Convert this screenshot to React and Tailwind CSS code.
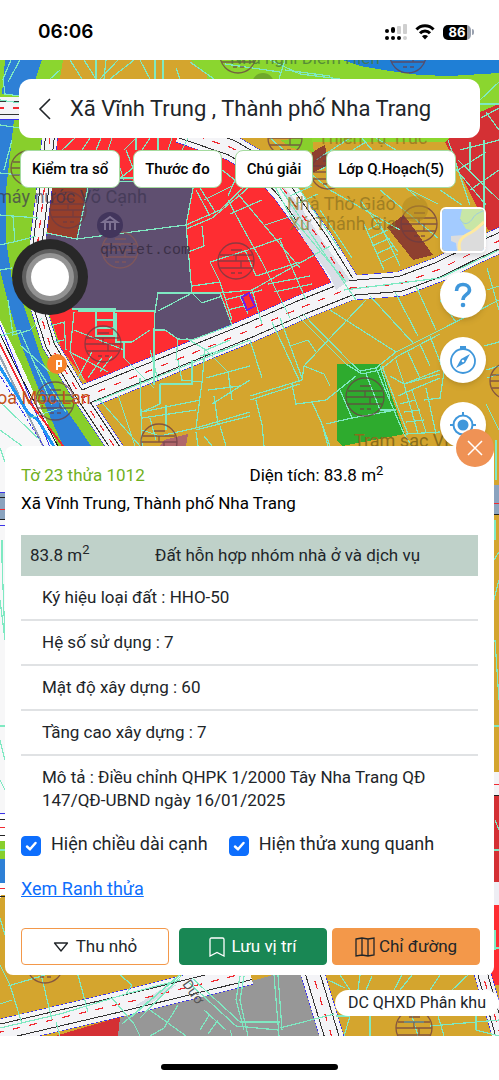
import React, { useState } from 'react';
import clsx from 'clsx';

// [fill, points]
const zones = [
  ['#8bd62f', '0,60 499,60 499,112 445,142 300,142 200,100 0,446'],
  ['#d4a52e', '63,60 190,60 207,74 210,142 52,142 58,90'],
  ['#1f7fd6', '343,60 360,66 390,71 420,75 450,76 499,73 499,60'],
  ['#f7f7f8', '0,320 60,446 60,540 14,840 0,900'],
  ['#88cf2c', '0,120 42,120 37,200 33,300 58,360 104,446 58,446 0,318'],
  ['#2e80d6', '5,60 42,60 36,78 22,96 2,94'],
  ['#2e80d6', '0,120 14,120 6,190 6,240 12,280 22,300 40,355 60,400 91,446 63,446 45,405 20,342 8,302 0,270'],
  ['#fe2d32', '56,136 195,136 240,155 262,178 334,276 325,292 250,322 90,386 62,350 44,300 50,190'],
  ['#d43034', '445,142 480,112 499,104 499,230 488,230'],
  ['#963f2b', '52,186 88,186 77,239 47,232'],
  ['#5f4f70', '88,181 120,179 193,188 186,225 192,293 220,293 232,325 212,339 177,339 165,330 154,330 155,311 78,311 42,296 46,233 76,239'],
  ['#8e402f', '387,227 404,215 433,255 413,260'],
  ['#8e402f', '312,152 325,145 328,165 312,173'],
  ['#2eab2e', '337,364 380,364 405,434 342,446 337,440'],
  ['#88cf2c', '280,140 312,138 314,152 292,148'],
  ['#b0676b', '164,440 188,434 186,446 160,446'],
  ['#8aa3bf', '0,492 8,492 8,520 0,520'],
  ['#8aa3bf', '490,485 499,485 499,514 490,514'],
  ['#ffffff', '0,815 8,815 8,841 0,841'],
  ['#88cf2c', '0,841 8,841 8,859 0,859'],
  ['#2e80d6', '0,859 8,859 8,883 0,883'],
  ['#ffffff', '0,883 8,883 8,895 0,895'],
  ['#f3f3f6', '490,772 499,772 499,795 490,795'],
  ['#d43034', '490,796 499,796 499,882 490,882'],
  ['#eeeef4', '490,882 499,882 499,905 490,905'],
  ['#fe2d32', '490,905 499,905 499,985 490,985'],
  ['#979797', '120,1018 273,975 304,972 322,1040 100,1040'],
  ['#d43034', '55,1036 120,1017 118,1036'],
];

// [center line, width]
const roads = [
  ['M-4 108 H30', 22],
  ['M50 136 L43 200 L38 240 L36 300 L50 345 L78 392 L118 452', 15],
  ['M180 130 L232 148 L262 166 L284 190 L320 240 L346 282', 25],
  ['M82 398 L250 330 L300 308 L350 288 L400 284 L440 269 L470 254 L505 238', 24],
  ['M-4 1033 L120 1004 L250 972', 25],
  ['M310 965 L334 1044', 23],
  ['M480 965 L503 1044', 16],
];

const parcels = [
  // top strip
  'M70 60 L82 79 M84 60 L96 79 M96 60 V79 M106 60 L104 79 M118 60 L100 79 M134 60 L110 79 M140 60 L150 79 M155 60 V79 M163 60 V79 M176 68 L180 79 M60 70 L50 79 M190 62 L214 79 M285 60 L279 79 M270 60 L300 74 L340 79 M285 70 L330 76 M225 64 L280 72',
  'M11 60 L3 79 L5 94 L20 96 M0 100 L20 103 M20 60 L8 82',
  // right of the search card
  'M480 100 L499 82 M480 104 H499 M481 118 L499 108 M486 112 L499 130',
  // river side
  'M0 125 L20 128 M0 173 L30 176 L45 180 M12 140 L4 170 M0 215 L38 218 M0 245 L22 240 L36 236 M13 216 L15 242 M0 270 L12 268 M8 300 L13 335 L30 330 L42 318 M0 336 L20 330 L52 405 M20 345 L50 372 M36 366 L66 412 M0 402 L40 440 M0 430 L22 446 M30 418 L60 408',
  // red block, top
  'M75 138 L62 150 M90 138 L82 150 M101 138 L96 150 M112 138 L108 150 M124 150 L136 138 M136 138 V150 M150 138 L142 150 M158 138 V150 M172 138 L168 150 M188 138 L182 150 M120 168 L124 180 M126 150 L133 168 L118 180 M120 178 L133 178',
  'M193 188 L186 225 L192 293 M88 181 L193 182 M88 188 L77 239 M46 233 L77 239 L186 225 M78 311 H155 L158 293 H220 L232 325 M155 311 L154 330 M192 293 L158 311 M192 293 L202 303 L222 296 M72 309 H116',
  'M186 229 L212 218 L240 195 L257 180 M186 225 L220 210 L245 186 M196 190 L210 216 M200 188 L216 213 M222 170 L235 180 L228 196 M228 200 L244 230 L262 262 M238 194 L300 268 M202 226 L204 246 L188 252 M192 286 L220 282 L210 262 L248 250 L282 238 M220 282 L232 320 M220 293 L252 290 M252 290 L330 246 M252 290 L262 324 M262 262 L290 318 M280 240 L306 300 M265 225 L295 215 M245 250 L256 276 L300 262 M225 300 L240 296 L248 314 M240 296 L262 290 M228 310 L244 306 M268 284 L310 276 M274 292 L312 284 M230 214 L262 200 M204 200 L232 186',
  // red block, bottom
  'M74 312 L70 352 L84 380 M70 352 L108 372 M74 330 L124 350 M96 312 V336 H114 V312 M96 320 H114 M96 328 H114 M116 313 V342 H132 L150 330 M124 342 L124 358 L154 388 M154 330 V385 M50 326 L64 322 L66 350 M78 378 L92 352 M88 378 L102 358 M100 372 L112 356 M64 340 L54 342 M178 338 L176 360 M154 330 L165 330 L178 339 L192 340 L232 325 M186 338 L206 350 L230 340',
  // gold block below the road
  'M98 398 L140 446 M118 395 L135 446 M140 378 L142 446 M160 384 H192 V360 M160 384 V404 L142 412 M142 412 L200 400 M150 350 L158 380 M142 418 L196 410 M150 418 L156 440 M166 405 V430 M178 360 L182 380 L202 382 L205 350 M202 382 L196 428 L250 412 M196 430 L250 416 M206 378 L250 366 M208 390 L240 386 M212 404 L250 380 M214 396 L218 424 M206 350 L228 372 L232 400 M196 432 L198 446 M204 436 L212 446 M220 426 L226 446 M200 356 L224 350 M142 430 L160 436 L196 428',
  'M250 340 L262 378 M272 322 L300 382 M280 318 L302 378 M250 396 L302 380 L304 366 L330 338 L366 300 M250 400 L300 384 M304 366 L324 374 L330 386 M290 346 L308 340 L316 352 M303 314 L350 362 L360 371 L376 368 L396 352 L440 330 L499 300 M298 316 L346 364 L362 374 L380 370 L398 356 L440 334 M330 310 L396 352 M370 296 L414 344 M395 292 L418 336 M416 286 L436 330 M440 300 L456 322 M292 384 L296 404 L312 402 L326 400 L356 376 M256 400 L262 424 L264 446 M312 402 L322 424 L328 446 M322 424 L330 446 M326 424 L352 418 L396 410 M340 390 L352 418 M366 374 L380 410 H396 M380 366 L390 398 M376 368 L404 434 M382 366 L408 434',
  'M396 360 L404 384 L440 370 M390 376 L404 384 L440 374 M398 396 L416 388 L440 378 M404 384 L418 434 M412 390 L426 432 M400 404 L416 400 M404 412 L420 410 M406 422 L424 420 M420 344 L430 366 M408 352 L420 378 M430 336 L444 372 L440 398 L424 400 M406 434 L440 432 M426 388 L436 434 M404 434 L412 446 M486 370 L499 366 M487 378 L499 374 M484 346 L499 342 M486 404 L499 430',
  // north east gold
  'M262 150 L300 190 M270 138 L330 190 L400 230 M300 190 L340 250 M316 160 L350 138 M320 170 L366 142 M330 178 L364 150 L420 200 M362 138 L372 150 M376 138 L396 150 M440 150 L486 205 M380 190 L438 238 M360 200 L398 252 M410 190 L438 204 M440 190 L462 205 M448 140 L470 205 M368 230 L382 222 M370 238 L388 230 M372 246 L390 238 M376 254 L394 246 M382 262 L398 254 M364 224 L384 270 M378 220 L400 266 M320 210 L352 258 M458 170 L486 152 M458 160 L499 200 M470 190 L499 170 M460 150 L499 140 M470 142 V170 M484 140 V215 M440 290 L450 280 M487 268 L499 310 M487 290 L499 286 M456 250 L487 236',
  // diagonal road services
  'M266 170 L290 215 L346 282 M272 176 L330 262 L356 300 M344 290 L440 278 L499 250 M94 402 L250 340 M290 196 L312 186 M296 204 L318 194',
  // strips beside the panel
  'M0 448 L5 462 M2 540 V560 L5 640 M0 600 L5 640 M0 726 H5 M0 740 L5 760 M0 780 L5 790 M0 850 H5 M0 918 L5 935 M496 440 V480 M495 520 V540 M494 560 L499 552 M494 600 L499 580 M495 640 L499 700 M494 726 H499 M495 820 L499 830 M494 850 H499 M495 930 V950 M495 948 H499',
  // bottom strip
  'M0 965 L10 985 L22 1024 M8 986 L45 975 M0 1004 L12 1000 M40 970 L52 1020 M78 975 L88 1012 M120 975 L132 985 L126 994 M0 1028 L60 1014 L126 994 L180 980 M56 1022 L60 1036 M112 998 L134 1024 L140 1036 M130 1018 L180 975 M122 1024 L176 978 M140 1018 L182 975 M150 1010 L186 1036 M188 982 L236 1026 L278 1030 M192 978 L240 1022 L280 1022 M240 976 L236 1000 L244 1030 M244 976 L240 1000 L248 1036 M274 975 L279 1036 M278 975 L282 1030 M280 1028 L334 1014 M204 1010 L226 1030 M210 1014 L200 1030 M218 1020 L208 1034 M230 1030 L232 1036 M178 1005 L164 1028 L150 1036 M328 980 L345 988 M340 975 L350 990 M360 975 L358 990 M372 976 L366 990 M402 975 L394 990 M412 975 L400 990 M440 975 L430 990 M452 990 L468 975 M336 1016 H350 L344 1036 M370 1016 V1036 M404 1022 H424 M412 1016 L418 1036 M438 1016 L444 1036 M476 1016 V1030 L499 1036 M430 1026 L499 1020',
];

const stamps = [
  [238, 55, 18], [408, 55, 18], [28, 168, 17], [68, 210, 18], [236, 261, 18], [120, 250, 18],
  [103, 344, 18], [55, 401, 19], [159, 442, 18], [365, 397, 19], [419, 224, 18], [285, 138, 17],
  [328, 172, 17], [508, 381, 18], [45, 965, 18], [414, 1028, 18],
];

function Stamp({ x, y, r }) {
  return (
    <g
      transform={`translate(${x} ${y})`}
      fill="none"
      stroke={x === 120 ? '#8a5a55' : '#6b3c45'}
      strokeWidth="1.3"
      opacity="0.75"
    >
      <circle r={r} />
      <path d={`M${-r + 2} -6 H${r - 2} M${-r} 0 H${r} M${-r + 2} 7 H${r - 2} M0 -6 V0 M-5 -11 H6 M-5 12 h4 m3 0 h4 M5 0 V7`} />
    </g>
  );
}

function PlanningMap() {
  return (
    <svg
      className="absolute inset-0 h-full w-full"
      viewBox="0 60 499 976"
      preserveAspectRatio="xMidYMin slice"
      aria-hidden="true"
    >
      <rect y="60" width="499" height="976" fill="#d4a52e" />
      <g shapeRendering="crispEdges">
        {zones.map(([fill, points], i) => (
          <polygon key={i} fill={fill} points={points} />
        ))}
        <g fill="none" strokeLinejoin="round">
          {roads.map(([d, w], i) => <path key={i} d={d} stroke="#3b33e8" strokeWidth={w + 1} />)}
          {roads.map(([d, w], i) => <path key={i} d={d} stroke="#f4f4f7" strokeWidth={w} />)}
          {roads.map(([d, w], i) => <path key={i} d={d} stroke="#333" strokeWidth={w * 0.66} />)}
          {roads.map(([d, w], i) => <path key={i} d={d} stroke="#f4f4f7" strokeWidth={w * 0.66 - 2} />)}
        </g>
        <path d="M280 182 L300 206 L322 240 L350 280 L336 290 L330 276 L304 240 Z" fill="#d9dde6" />
        <path d="M135 1006 L160 990 L178 984 L150 1004 Z" fill="#d9dde6" />
        <g fill="none" stroke="#f02b32" strokeWidth="1.2" strokeDasharray="8 9">
          {roads.map(([d], i) => <path key={i} d={d} />)}
        </g>

        {/* canal bank and railway on the left */}
        <g fill="none">
          <path d="M-2 320 L52 452" stroke="#3b33e8" />
          <path d="M-2 330 L20 375 L60 450" stroke="#222" />
          <path d="M-2 340 L28 400 L66 450" stroke="#f02b32" strokeWidth="2" />
          <path d="M-2 352 L44 448" stroke="#9aa4b2" strokeWidth="2" />
          <path d="M-2 364 L28 413 L38 420 L56 450" stroke="#2196f3" strokeWidth="3" />
          <path d="M-2 372 L46 450" stroke="#3b33e8" strokeDasharray="3 2" />
          <path d="M0 492 H6 M0 525 H6 M0 813 H6" stroke="#3b33e8" />
          <path d="M0 497 H6 M0 519 H6 M0 819 H6 M0 835 H6 M0 896 H6 M493 514 H499 M493 795 H499" stroke="#222" />
          <path d="M0 509 H6 M493 503 H499 M0 827 H6 M493 784 H499 M0 888 H6" stroke="#f02b32" />
        </g>

        <g fill="none" stroke="#7fe9c2" strokeWidth="1.2">
          {parcels.map((d, i) => <path key={i} d={d} />)}
        </g>
        <path d="M242 297 L249 293 L255 306 L247 310 Z" fill="none" stroke="#7a1be0" strokeWidth="2" />
      </g>

      {stamps.map(([x, y, r]) => <Stamp key={`${x}-${y}`} x={x} y={y} r={r} />)}

      <circle cx="110" cy="225" r="13" fill="#42355c" />
      <path d="M103 222 H117 L110 217 Z M105 223 V230 M110 223 V230 M115 223 V230" stroke="#7d7192" strokeWidth="2" fill="none" />
      <circle cx="57" cy="364" r="10" fill="#f5822a" />
      <path d="M57 370 V361 H61 V366 H57" stroke="#fff" strokeWidth="2" fill="none" />
      <circle cx="415" cy="209" r="13" fill="#b08a22" opacity="0.6" />
      <circle cx="263" cy="84" r="11" fill="#6fa82b" />

      <g fontFamily="Roboto, sans-serif" fontSize="18">
        <text x="-4" y="203" fill="#3c3550" opacity="0.7">máy nước Võ Cạnh</text>
        <text x="230" y="64" fill="#4a7a3a" fontSize="17" opacity="0.8">Nhà nghỉ Diễm Hiền</text>
        <text x="287" y="210" fill="#8b7020" opacity="0.7">Nhà Thờ Giáo</text>
        <text x="289" y="230" fill="#8b7020" opacity="0.7">Xứ Thánh Gia</text>
        <text x="318" y="144" fill="#8b7020" opacity="0.7">Thiền Tự Trúc</text>
        <text x="-3" y="404" fill="#c2521c">oa Mộc Lan</text>
        <text x="354" y="447" fill="#8a6d1c">Trạm sạc Vi</text>
        <text x="182" y="984" fill="#555" transform="rotate(55 182 984)" fontSize="14">Dươ</text>
        <text x="100" y="254" fill="#3c3148" fontFamily="Liberation Mono, monospace" fontSize="15">qhviet.com</text>
      </g>
    </svg>
  );
}

function StatusBar() {
  return (
    <header className="flex h-[60px] items-center justify-between bg-white pl-[38px] pr-[25px] pt-1">
      <span className="font-['Inter',sans-serif] text-[19px] font-semibold leading-6 text-black">06:06</span>
      <div className="flex items-center gap-2">
        <svg className="h-4 w-[22px]" viewBox="0 0 22 16" aria-hidden="true">
          <g fill="#000">
            <rect y="5" width="4" height="4" rx="2" />
            <rect x="6" y="3" width="4" height="6" rx="2" />
            <rect y="12" width="4" height="4" rx="2" />
            <rect x="6" y="12" width="4" height="4" rx="2" />
            <rect x="12" y="12" width="4" height="4" rx="2" />
          </g>
          <g fill="#cfcfcf">
            <rect x="12" y="2" width="4" height="8" rx="1" />
            <rect x="18" width="4" height="10" rx="1" />
            <rect x="18" y="12" width="4" height="4" rx="2" />
          </g>
        </svg>
        <svg className="h-4 w-5" viewBox="0 0 20 16" fill="none" stroke="#000" strokeWidth="3" aria-hidden="true">
          <path d="M1.5 5.6 C6 .6 14 .6 18.5 5.6" />
          <path d="M5 9.3 C7.6 6.3 12.4 6.3 15 9.3" />
          <path d="M10 15.5 L7 12.2 C8.5 10.7 11.5 10.7 13 12.2 Z" fill="#000" stroke="none" />
        </svg>
        <div className="flex items-center gap-px">
          <div className="flex h-[15px] w-7 items-center justify-center rounded-[5px] bg-gradient-to-r from-black from-85% to-gray-400 to-85% font-['Inter',sans-serif] text-[13px] font-bold leading-none text-white">
            86
          </div>
          <div className="h-[6px] w-[2px] rounded-r-full bg-gray-400" />
        </div>
      </div>
    </header>
  );
}

function RoundButton({ label, children }) {
  return (
    <button
      aria-label={label}
      className="flex size-[46px] items-center justify-center rounded-full bg-white text-[#3f97db] shadow-md"
    >
      {children}
    </button>
  );
}

function MapTools() {
  return (
    <div className="mr-[13px] mt-[19px] flex flex-col items-end gap-[19px]">
      <button aria-label="Lớp bản đồ" className="size-[46px] overflow-hidden rounded-md border-2 border-white shadow-md">
        <svg className="size-full" viewBox="0 0 42 42" aria-hidden="true">
          <rect width="42" height="42" fill="#a3cbff" />
          <path d="M20 0 H42 V24 L24 20 L18 10 Z" fill="#c8e6a6" />
          <path d="M42 16 L22 26 L9 27 L9 32 L14 34 L15 42 H42 Z" fill="#dcdcdc" />
          <path d="M18 10 C22 18 28 14 31 9 S38 4 42 1" fill="none" stroke="#9ccbe0" strokeWidth="1" />
          <path d="M18 42 C15 32 20 28 28 24 S38 16 42 13" fill="none" stroke="#ffe9a0" strokeWidth="3" />
        </svg>
      </button>
      <RoundButton label="Trợ giúp">
        <svg className="size-7" viewBox="0 0 28 28" fill="none" stroke="currentColor" strokeWidth="3.6" aria-hidden="true">
          <path d="M7.5 10 C7.5 5 10.500 3.500 14 3.500 C18 3.500 20.500 5.800 20.500 9 C20.500 13.500 14 13.500 14 19" />
          <circle cx="14" cy="24" r="2.3" fill="currentColor" stroke="none" />
        </svg>
      </RoundButton>
      <RoundButton label="La bàn">
        <svg className="size-7" viewBox="0 0 28 28" aria-hidden="true">
          <circle cx="14" cy="15" r="12" fill="none" stroke="currentColor" strokeWidth="1.8" />
          <path d="M11 0 h6 v3 h-6 z" fill="currentColor" />
          <path d="M21 8 L16 17 L7 22 L12 13 Z" fill="currentColor" />
          <circle cx="14" cy="15" r="1.3" fill="#fff" />
        </svg>
      </RoundButton>
      <RoundButton label="Vị trí của tôi">
        <svg className="size-7" viewBox="0 0 28 28" fill="none" stroke="currentColor" strokeWidth="2" aria-hidden="true">
          <circle cx="14" cy="14" r="9.5" />
          <circle cx="14" cy="14" r="5.5" fill="currentColor" stroke="none" />
          <path d="M14 1 V5 M14 23 V27 M1 14 H5 M23 14 H27" />
        </svg>
      </RoundButton>
    </div>
  );
}

function Check({ label, checked, onChange }) {
  return (
    <label className="flex items-center gap-[10px] text-[18px] leading-7 text-[#212529]">
      <span className="mt-1 grid size-5">
        <input
          type="checkbox"
          checked={checked}
          onChange={(e) => onChange(e.target.checked)}
          className="peer size-5 appearance-none rounded border border-gray-300 [grid-area:1/1] checked:border-[#0d6efd] checked:bg-[#0d6efd]"
        />
        <svg
          className="pointer-events-none invisible size-5 [grid-area:1/1] peer-checked:visible"
          viewBox="0 0 20 20"
          fill="none"
          stroke="#fff"
          strokeWidth="2.5"
          strokeLinecap="round"
          strokeLinejoin="round"
          aria-hidden="true"
        >
          <path d="M6 10.500 L9 13.300 L14.500 7" />
        </svg>
      </span>
      {label}
    </label>
  );
}

const Area = ({ value }) => (
  <span>
    {value} m<sup className="text-[13px] leading-none">2</sup>
  </span>
);

const details = [
  'Ký hiệu loại đất : HHO-50',
  'Hệ số sử dụng : 7',
  'Mật độ xây dựng : 60',
  'Tầng cao xây dựng : 7',
  'Mô tả : Điều chỉnh QHPK 1/2000 Tây Nha Trang QĐ 147/QĐ-UBND ngày 16/01/2025',
];

function ParcelPanel() {
  const [showLength, setShowLength] = useState(true);
  const [showAround, setShowAround] = useState(true);

  return (
    <section className="relative mx-[5px] -mt-[2px] rounded-lg bg-white px-4 pb-[10px] pt-[15px] text-[17px] text-[#212529]">
      <button
        aria-label="Đóng"
        className="absolute -top-[17px] right-0 flex size-[38px] items-center justify-center rounded-full bg-[#ef9255]"
      >
        <svg className="size-4" viewBox="0 0 16 16" stroke="#fff" strokeWidth="1.5" aria-hidden="true">
          <path d="M1 1 L15 15 M15 1 L1 15" />
        </svg>
      </button>

      <div className="grid grid-cols-2 leading-7 text-black">
        <span className="text-[#6fb01c]">Tờ 23 thửa 1012</span>
        <Area value="Diện tích: 83.8" />
      </div>
      <p className="leading-7 text-black">Xã Vĩnh Trung, Thành phố Nha Trang</p>

      <div className="mt-[18px] flex h-[41px] items-center bg-[#bfd1c9] pl-[9px]">
        <div className="w-[125px]">
          <Area value="83.8" />
        </div>
        <div>Đất hỗn hợp nhóm nhà ở và dịch vụ</div>
      </div>
      <ul>
        {details.map((text, i) => (
          <li
            key={text}
            className={clsx('py-[10px] pl-[21px] pr-4 leading-[23px]', i < details.length - 1 && 'border-b-2 border-[#e0e2e4]')}
          >
            {text}
          </li>
        ))}
      </ul>

      <div className="mt-2 flex gap-[21px]">
        <Check label="Hiện chiều dài cạnh" checked={showLength} onChange={setShowLength} />
        <Check label="Hiện thửa xung quanh" checked={showAround} onChange={setShowAround} />
      </div>
      <a href="#ranh-thua" className="mt-[17px] block w-fit text-[18px] leading-7 text-[#0d6efd] underline">
        Xem Ranh thửa
      </a>

      <div className="-mr-[2px] mt-[25px] flex">
        <button className="mr-[10px] flex h-[37px] flex-1 items-center justify-center gap-[7px] rounded border border-[#f3984a]">
          <svg className="h-[10px] w-4" viewBox="0 0 16 10" fill="none" stroke="currentColor" strokeWidth="1.3" strokeLinejoin="round" aria-hidden="true">
            <path d="M1.5 1 H14.500 L8 9 Z" />
          </svg>
          Thu nhỏ
        </button>
        <button className="mr-[5px] flex h-[37px] flex-1 items-center justify-center gap-[6px] rounded border border-[#198754] bg-[#198754] text-white">
          <svg className="h-5 w-4" viewBox="0 0 16 20" fill="none" stroke="currentColor" strokeWidth="1.3" aria-hidden="true">
            <path d="M1 19 V2.500 Q1 1 2.500 1 H13.500 Q15 1 15 2.500 V19 L8 15.500 Z" />
          </svg>
          Lưu vị trí
        </button>
        <button className="flex h-[37px] flex-1 items-center justify-center gap-1 rounded border border-[#f3984a] bg-[#f3984a]">
          <svg className="size-5" viewBox="0 0 20 20" fill="none" stroke="currentColor" strokeWidth="1.3" aria-hidden="true">
            <path d="M1 2 L7 1 L13 2 L19 1 V18 L13 19 L7 18 L1 19 Z M7 1 V18 M13 2 V19" />
          </svg>
          Chỉ đường
        </button>
      </div>
    </section>
  );
}

const filters = ['Kiểm tra sổ', 'Thước đo', 'Chú giải', 'Lớp Q.Hoạch(5)'];

export default function App() {
  return (
    <div className="min-h-screen bg-white font-['Roboto',sans-serif] text-[#212529]">
      <StatusBar />

      <main className="relative overflow-hidden pb-5 pt-[19px]">
        <PlanningMap />

        <div className="relative">
          <div className="mx-[19px] flex h-[59px] items-center gap-4 rounded-xl bg-white pl-[17px]">
            <button aria-label="Quay lại">
              <svg className="h-6 w-[18px]" viewBox="0 0 18 24" fill="none" stroke="currentColor" strokeWidth="1.6" aria-hidden="true">
                <path d="M14 2 L4 12 L14 22" />
              </svg>
            </button>
            <h1 className="text-[22px] leading-8">Xã Vĩnh Trung , Thành phố Nha Trang</h1>
          </div>

          <nav className="ml-5 mt-3 flex gap-[13px]">
            {filters.map((name) => (
              <button
                key={name}
                className="h-[38px] whitespace-nowrap rounded-lg border border-[#a5dba0] bg-white px-[11px] text-[15px] font-medium text-black"
              >
                {name}
              </button>
            ))}
          </nav>

          <MapTools />
          <ParcelPanel />

          <div className="ml-auto mt-[15px] w-fit rounded-full bg-white px-[13px] text-[16px] leading-[26px]">
            DC QHXD Phân khu
          </div>
        </div>

        {/* floating touch button */}
        <button
          aria-label="AssistiveTouch"
          className="absolute left-3 top-[179px] flex size-[76px] items-center justify-center rounded-full bg-[#282828]"
        >
          <span className="flex size-14 items-center justify-center rounded-full bg-[#5f5f5f]">
            <span className="flex size-12 items-center justify-center rounded-full bg-[#939393]">
              <span className="size-[38px] rounded-full bg-white" />
            </span>
          </span>
        </button>
      </main>

      <footer className="flex h-11 items-end justify-center pb-[10px]">
        <div className="h-[6px] w-[177px] rounded-full bg-black" />
      </footer>
    </div>
  );
}
